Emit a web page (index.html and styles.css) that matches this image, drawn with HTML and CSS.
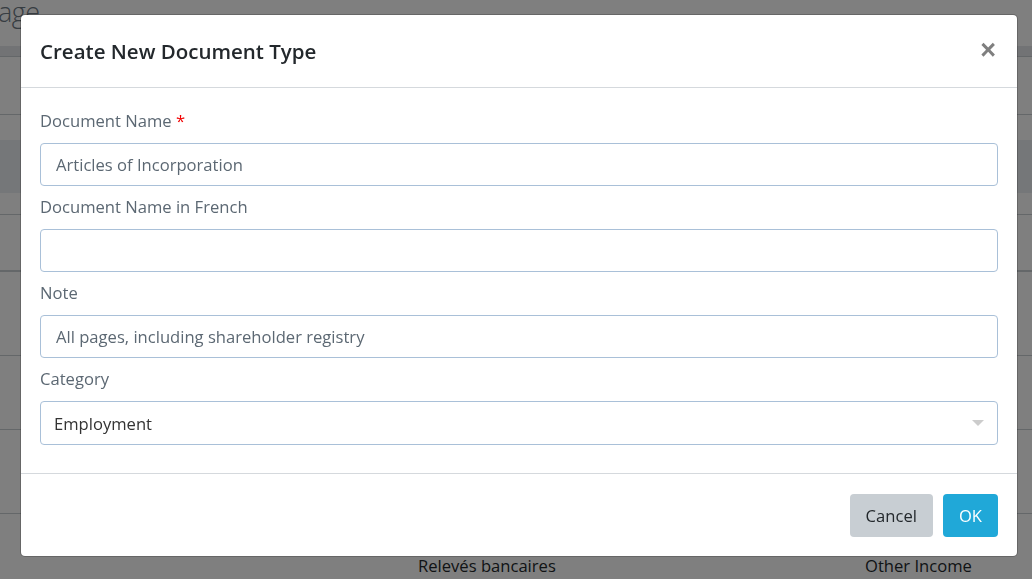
FILE: index.html
```html
<!DOCTYPE html>
<html lang="en">
<head>
<meta charset="utf-8">
<title>Create New Document Type</title>
<link rel="stylesheet" href="styles.css">
</head>
<body>
<div class="page">
  <div class="page-title">age</div>
  <div class="band"></div>
  <div class="row row-a"></div>
  <div class="row row-b"><div class="shade"></div></div>
  <div class="row row-c"></div>
  <div class="row row-d"></div>
  <div class="row row-e"></div>
  <div class="row row-f"></div>
  <div class="row-text">
    <span class="cell-1">Relevés bancaires</span>
    <span class="cell-2">Other Income</span>
  </div>
</div>
<div class="backdrop"></div>
<div class="modal" role="dialog">
  <div class="modal-header">
    <h5 class="modal-title">Create New Document Type</h5>
    <button class="close" type="button" aria-label="Close">×</button>
  </div>
  <div class="modal-body">
    <div class="form-group">
      <label class="label">Document Name <span class="req">*</span></label>
      <div class="input">Articles of Incorporation</div>
    </div>
    <div class="form-group">
      <label class="label">Document Name in French</label>
      <div class="input"></div>
    </div>
    <div class="form-group">
      <label class="label">Note</label>
      <div class="input">All pages, including shareholder registry</div>
    </div>
    <div class="form-group last">
      <label class="label">Category</label>
      <div class="select">
        <span class="select-value">Employment</span>
        <span class="select-arrow"></span>
      </div>
    </div>
  </div>
  <div class="modal-footer">
    <button class="btn btn-secondary" type="button">Cancel</button>
    <button class="btn btn-info" type="button">OK</button>
  </div>
</div>
</body>
</html>
```

FILE: styles.css
```css
* { box-sizing: border-box; }
html, body { margin: 0; padding: 0; }
body {
  font-family: "Open Sans", "Noto Sans", sans-serif;
  font-size: 16.6px;
  color: #23282c;
  background: #ffffff;
  width: 1032px;
  height: 579px;
  overflow: hidden;
}

/* background page */
.page { width: 1032px; }
.page-title {
  font-size: 27px;
  font-weight: 300;
  line-height: 30px;
  margin-top: -3px;
  text-indent: -2px;
  letter-spacing: -0.5px;
  color: #6f7a85;
  height: 49px;
}
.band {
  height: 11px;
  background: #e4e7ea;
  border-bottom: 1px solid #c8ced3;
}
.row { border-bottom: 1px solid #c8ced3; }
.row-a { height: 58px; }
.row-b { height: 100px; padding-top: 25px; }
.shade { height: 53px; background: #ebeef3; }
.row-c { height: 57px; border-bottom-width: 2px; }
.row-d { height: 84px; }
.row-e { height: 74px; }
.row-f { height: 84px; }
.row-text {
  display: grid;
  grid-template-columns: 418px 447px 1fr;
  padding-top: 41px;
  line-height: 22px;
  color: #23282c;
}
.cell-1 { grid-column: 2; }
.cell-2 { grid-column: 3; }

.backdrop {
  position: fixed;
  inset: 0;
  background: rgba(0, 0, 0, 0.5);
}

/* modal */
.modal {
  position: fixed;
  left: 20px;
  top: 14px;
  width: 998px;
  background: #ffffff;
  border: 1px solid rgba(0, 0, 0, 0.2);
  border-radius: 5px;
  background-clip: padding-box;
}
.modal-header {
  height: 73px;
  display: flex;
  align-items: center;
  justify-content: space-between;
  padding: 0 19px;
  border-bottom: 1px solid #d5d9dd;
}
.modal-title {
  margin: 0;
  font-size: 20.5px;
  font-weight: 600;
  color: #23282c;
  line-height: 28px;
}
.close {
  border: 0;
  background: transparent;
  padding: 0;
  font-family: "Liberation Sans", Arial, sans-serif;
  font-size: 27px;
  font-weight: 700;
  line-height: 1;
  color: #7f7f7f;
  margin-top: -2px;
  margin-right: 2px;
  cursor: pointer;
}
.modal-body {
  padding: 21px 19px 19px;
}
.form-group { margin-bottom: 9px; }
.form-group.last { margin-bottom: 9px; }
.label {
  display: block;
  line-height: 24px;
  margin-bottom: 10px;
  color: #5c6873;
}
.req { color: #f20000; }
.input {
  height: 43px;
  border: 1px solid #a9c0d8;
  border-radius: 4px;
  padding: 0 15px;
  display: flex;
  align-items: center;
  color: #5c6873;
}
.select {
  height: 44px;
  border: 1px solid #a9c0d8;
  border-radius: 4px;
  padding: 0 13px;
  display: flex;
  align-items: center;
  justify-content: space-between;
  color: #333333;
}
.select-arrow {
  width: 0;
  height: 0;
  border-left: 6px solid transparent;
  border-right: 6px solid transparent;
  border-top: 6px solid #cccccc;
}
.modal-footer {
  border-top: 1px solid #d5d9dd;
  padding: 20px 19px 19px;
  display: flex;
  justify-content: flex-end;
  gap: 10px;
}
.btn {
  height: 43px;
  border: 0;
  border-radius: 4px;
  font-family: inherit;
  font-size: 16.6px;
  padding: 0 16px;
}
.btn-secondary { background: #c8ced3; color: #23282c; }
.btn-info { background: #20a8d8; color: #ffffff; }
```
